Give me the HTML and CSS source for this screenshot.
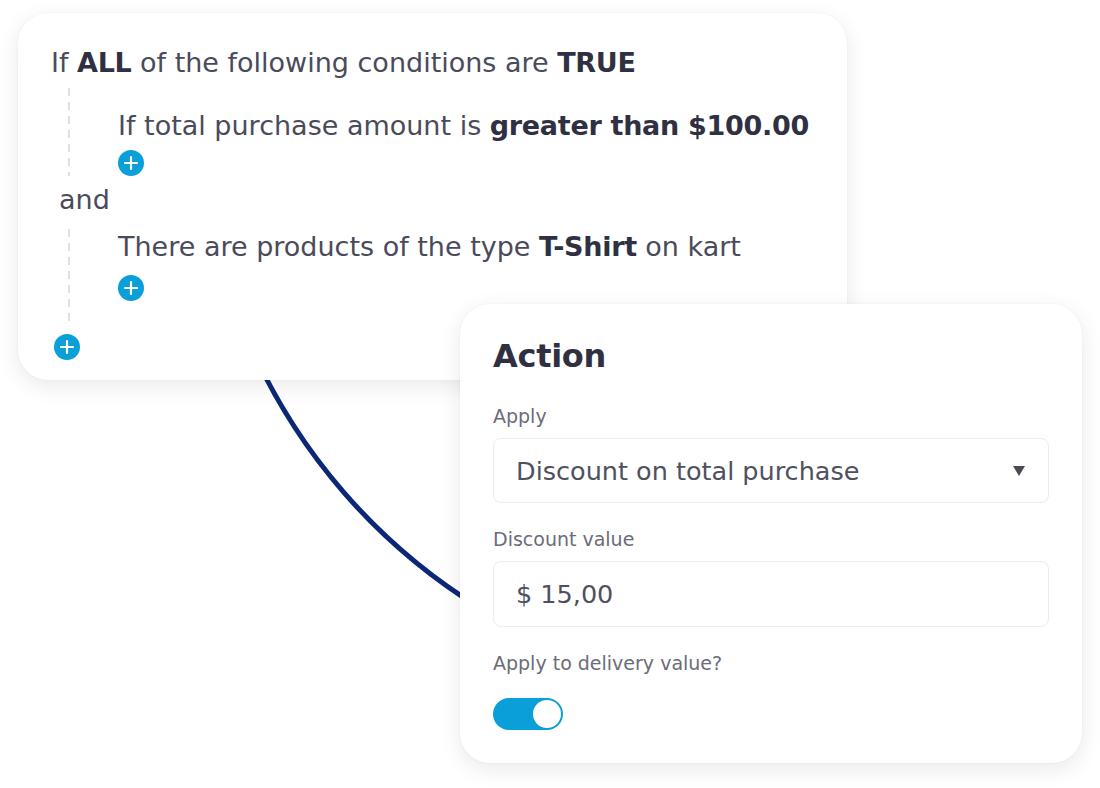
FILE: index.html
```html
<!DOCTYPE html>
<html lang="en">
<head>
<meta charset="utf-8">
<title>Rule builder</title>
<link rel="stylesheet" href="styles.css">
</head>
<body>
<main class="canvas">
  <svg class="connector" width="1100" height="788" viewBox="0 0 1100 788" aria-hidden="true">
    <path d="M 248 340 A 589 589 0 0 0 480 608" fill="none" stroke="#0b2878" stroke-width="5"/>
  </svg>

  <section class="card card-conditions">
    <p class="line">If <b>ALL</b> of the following conditions are <b>TRUE</b></p>
    <div class="group group-first">
      <p class="line">If total purchase amount is <b>greater than $100.00</b></p>
      <button class="add" aria-label="Add condition"><svg viewBox="0 0 26 26"><path d="M13 7v12M7 13h12" stroke="#fff" stroke-width="2.2" stroke-linecap="round"/></svg></button>
    </div>
    <p class="line and">and</p>
    <div class="group group-second">
      <p class="line">There are products of the type <b>T-Shirt</b> on kart</p>
      <button class="add" aria-label="Add condition"><svg viewBox="0 0 26 26"><path d="M13 7v12M7 13h12" stroke="#fff" stroke-width="2.2" stroke-linecap="round"/></svg></button>
    </div>
    <button class="add add-root" aria-label="Add group"><svg viewBox="0 0 26 26"><path d="M13 7v12M7 13h12" stroke="#fff" stroke-width="2.2" stroke-linecap="round"/></svg></button>
  </section>

  <section class="card card-action">
    <h2 class="title">Action</h2>
    <label class="label label-first">Apply</label>
    <div class="field select">
      <span>Discount on total purchase</span>
      <svg class="caret" width="12" height="10" viewBox="0 0 12 10"><path d="M0 0h12L6 10z" fill="#4a4a58"/></svg>
    </div>
    <label class="label">Discount value</label>
    <div class="field"><span>$ 15,00</span></div>
    <label class="label">Apply to delivery value?</label>
    <div class="toggle" role="switch" aria-checked="true"><span class="knob"></span></div>
  </section>
</main>
</body>
</html>
```

FILE: styles.css
```css
* { box-sizing: border-box; }
html, body { margin: 0; padding: 0; background: #fff; }
body {
  font-family: "DejaVu Sans", "Open Sans", sans-serif;
  color: #4a4b5a;
}
.canvas {
  position: relative;
  width: 1100px;
  height: 788px;
  overflow: hidden;
}
.connector {
  position: absolute;
  left: 0;
  top: 0;
}
.card {
  position: absolute;
  background: #fff;
  border-radius: 30px;
  box-shadow: 0 6px 22px rgba(0, 0, 0, 0.09), 0 0 2px rgba(0, 0, 0, 0.06);
}
.card-conditions {
  left: 18px;
  top: 13px;
  width: 829px;
  height: 367px;
  padding: 34px 33px 0 33px;
}
.line {
  margin: 0;
  font-size: 27px;
  line-height: 32px;
  white-space: nowrap;
}
b { font-weight: 700; color: #2f3142; letter-spacing: -0.3px; }
.group {
  margin-left: 17px;
  padding-left: 50px;
  background: repeating-linear-gradient(to bottom, #e0e0e0 0 8px, transparent 8px 14px) left top / 2px 100% no-repeat;
  display: flex;
  flex-direction: column;
  align-items: flex-start;
  gap: 8px;
}
.group-first { margin-top: 9px; padding-top: 22px; height: 88px; }
.group-second { margin-top: 13px; padding-top: 2px; height: 92px; gap: 12px; }
.and { margin: 8px 0 0 8px; }
.add {
  width: 26px;
  height: 26px;
  border: 0;
  padding: 0;
  border-radius: 50%;
  background: #0a9fd8;
  display: block;
  cursor: pointer;
}
.add svg { width: 26px; height: 26px; display: block; }
.add-root { margin: 13px 0 0 3px; }

.card-action {
  left: 460px;
  top: 304px;
  width: 622px;
  height: 459px;
  padding: 32px 33px 0 33px;
  display: flex;
  flex-direction: column;
  align-items: stretch;
}
.title {
  margin: 0;
  font-size: 32px;
  line-height: 40px;
  font-weight: 700;
  color: #2f3142;
  letter-spacing: -0.3px;
}
.label {
  display: block;
  margin-top: 24px;
  font-size: 19px;
  line-height: 24px;
  color: #6b6c78;
}
.label-first { margin-top: 28px; }
.field {
  margin-top: 10px;
  height: 66px;
  border: 1px solid #ececef;
  border-radius: 8px;
  padding: 0 23px 0 22px;
  display: flex;
  align-items: center;
  justify-content: space-between;
  font-size: 25.5px;
  color: #4f5060;
}
.select { height: 65px; }
.toggle {
  margin-top: 23px;
  width: 70px;
  height: 32px;
  border-radius: 16px;
  background: #0a9fd8;
  padding: 2px;
  display: flex;
  justify-content: flex-end;
}
.knob {
  width: 28px;
  height: 28px;
  border-radius: 50%;
  background: #fff;
}
```
